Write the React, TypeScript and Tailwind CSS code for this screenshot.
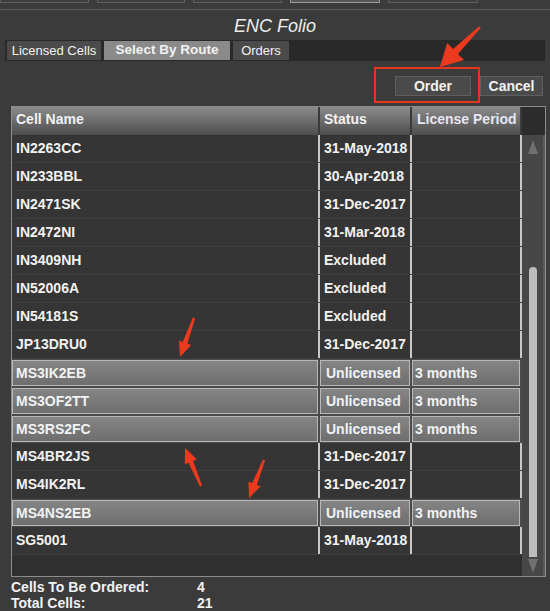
import React from 'react';

type Row = { name: string; status: string; period?: string; picked?: boolean };

const rows: Row[] = [
  { name: 'IN2263CC', status: '31-May-2018' },
  { name: 'IN233BBL', status: '30-Apr-2018' },
  { name: 'IN2471SK', status: '31-Dec-2017' },
  { name: 'IN2472NI', status: '31-Mar-2018' },
  { name: 'IN3409NH', status: 'Excluded' },
  { name: 'IN52006A', status: 'Excluded' },
  { name: 'IN54181S', status: 'Excluded' },
  { name: 'JP13DRU0', status: '31-Dec-2017' },
  { name: 'MS3IK2EB', status: 'Unlicensed', period: '3 months', picked: true },
  { name: 'MS3OF2TT', status: 'Unlicensed', period: '3 months', picked: true },
  { name: 'MS3RS2FC', status: 'Unlicensed', period: '3 months', picked: true },
  { name: 'MS4BR2JS', status: '31-Dec-2017' },
  { name: 'MS4IK2RL', status: '31-Dec-2017' },
  { name: 'MS4NS2EB', status: 'Unlicensed', period: '3 months', picked: true },
  { name: 'SG5001', status: '31-May-2018' },
];

// callout arrows drawn over the dialog: tail -> tip
const arrows = [
  { x1: 480, y1: 27, x2: 440, y2: 67, w: 7, l: 22, h: 24 },
  { x1: 194, y1: 318, x2: 180, y2: 357, w: 5, l: 15, h: 13 },
  { x1: 201, y1: 486, x2: 185, y2: 448, w: 5, l: 15, h: 13 },
  { x1: 264, y1: 460, x2: 249, y2: 498, w: 5, l: 15, h: 13 },
];

function arrowPoints(a: (typeof arrows)[number]) {
  const dx = a.x2 - a.x1;
  const dy = a.y2 - a.y1;
  const len = Math.hypot(dx, dy);
  const ux = dx / len;
  const uy = dy / len;
  const nx = -uy;
  const ny = ux;
  const bx = a.x2 - ux * a.l;
  const by = a.y2 - uy * a.l;
  const t = 1.2;
  const pts = [
    [a.x1 + nx * t, a.y1 + ny * t],
    [bx + (nx * a.w) / 2, by + (ny * a.w) / 2],
    [bx + (nx * a.h) / 2, by + (ny * a.h) / 2],
    [a.x2, a.y2],
    [bx - (nx * a.h) / 2, by - (ny * a.h) / 2],
    [bx - (nx * a.w) / 2, by - (ny * a.w) / 2],
    [a.x1 - nx * t, a.y1 - ny * t],
  ];
  return pts.map(([x, y]) => `${x.toFixed(1)},${y.toFixed(1)}`).join(' ');
}

const PlainRow: React.FC<{ row: Row }> = ({ row }) => (
  <div className="flex h-[28px] border-b border-[#3e3e3e] bg-[#353535]">
    <div className="w-[308px] border-r-2 border-[#c9c9c9] pl-[4px] flex items-center">{row.name}</div>
    <div className="w-[92px] border-r-2 border-[#c9c9c9] pl-[4px] flex items-center">{row.status}</div>
    <div className="w-[110px] border-r-2 border-[#c9c9c9] pl-[4px] flex items-center">{row.period}</div>
  </div>
);

const PickedRow: React.FC<{ row: Row }> = ({ row }) => (
  <div className="flex h-[28px] bg-[#4a4a4a] py-[1px] gap-[2px] pr-[2px]">
    <div className="w-[306px] border border-[#b8b8b8] bg-gradient-to-b from-[#858585] to-[#6e6e6e] pl-[3px] flex items-center">{row.name}</div>
    <div className="w-[90px] border border-[#b8b8b8] bg-gradient-to-b from-[#858585] to-[#6e6e6e] pl-[5px] flex items-center">{row.status}</div>
    <div className="w-[108px] border border-[#b8b8b8] bg-gradient-to-b from-[#858585] to-[#6e6e6e] pl-[2px] flex items-center">{row.period}</div>
  </div>
);

export default function App() {
  return (
    <div className="relative w-[550px] h-[611px] overflow-hidden bg-[#3b3b3b] text-[#f2f2f2] font-['Liberation_Sans',Arial,sans-serif]">
      {/* clipped toolbar strip */}
      <div className="h-[10px] border-b border-[#5c5c5c] flex gap-[8px] items-start">
        {[89, 88, 89, 90, 90].map((w, i) => (
          <div
            key={i}
            style={{ width: w }}
            className={`h-[3px] border-b border-l border-r ${i === 3 ? 'border-[#9a9a9a] bg-[#575757]' : 'border-[#606060] bg-[#3e3e3e]'}`}
          />
        ))}
      </div>

      <div className="h-[30px] flex items-center justify-center text-[18px] italic text-[#ececec] pt-[3px]">ENC Folio</div>

      <div className="mx-[5px] h-[21px] bg-[#292929] flex items-end gap-[3px] pl-[2px] pb-[1px] text-[13px]">
        <div className="w-[94px] h-[19px] bg-[#4b4b4b] flex items-center justify-center">Licensed Cells</div>
        <div className="w-[126px] h-[19px] bg-[#8a8a8a] flex items-center justify-center font-bold text-[13.5px]">Select By Route</div>
        <div className="w-[56px] h-[19px] bg-[#4b4b4b] flex items-center justify-center">Orders</div>
      </div>

      <div className="h-[45px] flex justify-end items-start pt-[15px] pr-[7px] gap-[9px] text-[14px] font-bold">
        <button className="w-[76px] h-[20px] bg-[#4a4a4a] border border-[#5e5e5e] flex items-center justify-center">Order</button>
        <button className="w-[63px] h-[20px] bg-[#4a4a4a] border border-[#5e5e5e] flex items-center justify-center">Cancel</button>
      </div>

      {/* cell grid */}
      <div className="ml-[11px] w-[535px] h-[471px] border border-[#8c8c8c] flex text-[14px] font-bold">
        <div className="w-[510px] flex flex-col">
          <div className="flex h-[28px] bg-gradient-to-b from-[#8c8c8c] via-[#6c6c6c] to-[#4e4e4e]">
            <div className="w-[308px] border-r-2 border-[#3a3a3a] pl-[4px] pb-[3px] flex items-center">Cell Name</div>
            <div className="w-[92px] border-r-2 border-[#3a3a3a] pl-[4px] pb-[3px] flex items-center">Status</div>
            <div className="w-[110px] border-r-2 border-[#3a3a3a] pl-[5px] pb-[3px] flex items-center text-[#e6e6f4]">License Period</div>
          </div>
          {rows.map((r) => (r.picked ? <PickedRow key={r.name} row={r} /> : <PlainRow key={r.name} row={r} />))}
          <div className="flex-1 bg-[#2f2f2f]" />
        </div>

        {/* scrollbar */}
        <div className="flex-1 flex flex-col">
          <div className="h-[28px] bg-[#2c2c2c]" />
          <div className="flex-1 bg-[#474747] border-r-2 border-[#5a5a5a] flex flex-col items-center pt-[5px] pb-[3px]">
            <svg width="12" height="14" viewBox="0 0 12 14">
              <polygon points="6,0 11,14 1,14" fill="#707070" />
            </svg>
            <div className="h-[113px]" />
            <div className="w-[8px] flex-1 rounded-t-full bg-[#bdbdbd]" />
            <svg width="12" height="14" viewBox="0 0 12 14" className="mt-[2px]">
              <polygon points="1,0 11,0 6,14" fill="#707070" />
            </svg>
          </div>
        </div>
      </div>

      <div className="pl-[11px] pt-[2px] text-[14px] font-bold leading-[16px]">
        <div className="flex">
          <span className="w-[186px]">Cells To Be Ordered:</span>
          <span>4</span>
        </div>
        <div className="flex">
          <span className="w-[186px]">Total Cells:</span>
          <span>21</span>
        </div>
      </div>

      {/* red callouts */}
      <div className="absolute left-[374px] top-[67px] w-[106px] h-[36px] border-2 border-[#e8341c] pointer-events-none" />
      <svg className="absolute left-0 top-0 pointer-events-none" width="550" height="611">
        {arrows.map((a, i) => (
          <polygon key={i} points={arrowPoints(a)} fill="#ec3a1f" />
        ))}
      </svg>
    </div>
  );
}
